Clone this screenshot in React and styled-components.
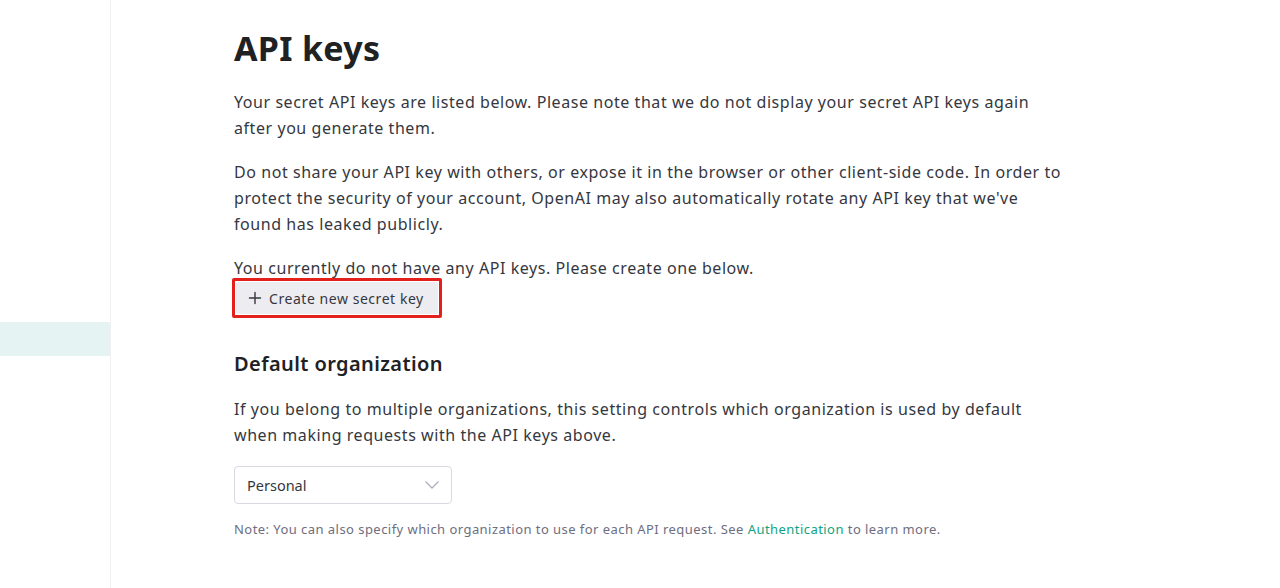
import React from "react";
import styled, { createGlobalStyle } from "styled-components";

const Global = createGlobalStyle`
  html, body { margin: 0; padding: 0; background: #fff; }
  body { font-family: "Noto Sans", Inter, sans-serif; color: #353740; }
  * { box-sizing: border-box; }
`;

const Layout = styled.div`
  display: flex;
  min-height: 588px;
  width: 1280px;
`;

const Sidebar = styled.aside`
  width: 111px;
  flex: none;
  border-right: 1px solid #f1f1f3;
  padding-top: 322px;
`;

const NavItem = styled.div`
  height: 34px;
  background: ${(p) => (p.$active ? "#e6f3f3" : "transparent")};
`;

const Main = styled.main`
  flex: 1;
  padding: 27px 0 0 123px;
`;

const Content = styled.div`
  width: 830px;
`;

const Title = styled.h1`
  margin: 0 0 20px;
  font-size: 34px;
  line-height: 42px;
  font-weight: 700;
  letter-spacing: 0.3px;
  color: #202123;
`;

const Para = styled.p`
  margin: 0 0 ${(p) => p.$mb ?? 18}px;
  font-size: 16px;
  line-height: 26px;
  letter-spacing: 0.56px;
  color: #353740;
`;

const Highlight = styled.div`
  display: inline-flex;
  border: 3px solid #e3201b;
  border-radius: 2px;
  margin: -3px 0 0 -2px;
  padding: 1px;
`;

const Button = styled.button`
  display: inline-flex;
  align-items: center;
  gap: 7px;
  height: 32px;
  padding: 0 14px 0 12px;
  border: none;
  border-radius: 3px;
  background: #ececf1;
  color: #353740;
  font-family: inherit;
  font-size: 14px;
  letter-spacing: 0.55px;
`;

const Heading = styled.h2`
  margin: 32px 0 18px;
  font-size: 20px;
  line-height: 28px;
  font-weight: 600;
  letter-spacing: 0.4px;
  color: #202123;
`;

const Select = styled.div`
  display: flex;
  align-items: center;
  justify-content: space-between;
  width: 218px;
  height: 38px;
  padding: 0 12px;
  border: 1px solid #d9d9e3;
  border-radius: 4px;
  font-size: 14.5px;
  color: #353740;
  margin-top: 18px;
`;

const Note = styled.p`
  margin: 16px 0 0;
  font-size: 13px;
  line-height: 18px;
  letter-spacing: 0.45px;
  color: #6e6e80;
`;

const Link = styled.a`
  color: #10a37f;
  text-decoration: none;
`;

export default function App() {
  return (
    <>
      <Global />
      <Layout>
        <Sidebar>
          <NavItem $active />
        </Sidebar>
        <Main>
          <Content>
            <Title>API keys</Title>
            <Para>
              Your secret API keys are listed below. Please note that we do not display your secret API keys again after you generate them.
            </Para>
            <Para>
              Do not share your API key with others, or expose it in the browser or other client-side code. In order to protect the security of your account, OpenAI may also automatically rotate any API key that we've found has leaked publicly.
            </Para>
            <Para $mb={0}>You currently do not have any API keys. Please create one below.</Para>
            <Highlight>
              <Button>
                <svg width="14" height="14" viewBox="0 0 14 14" fill="none" stroke="#353740" strokeWidth="1.4" strokeLinecap="round">
                  <path d="M7 1.5v11M1.5 7h11" />
                </svg>
                Create new secret key
              </Button>
            </Highlight>
            <Heading>Default organization</Heading>
            <Para $mb={0}>
              If you belong to multiple organizations, this setting controls which organization is used by default when making requests with the API keys above.
            </Para>
            <Select>
              <span>Personal</span>
              <svg width="14" height="8" viewBox="0 0 14 8" fill="none" stroke="#acacbe" strokeWidth="1.3" strokeLinecap="round" strokeLinejoin="round">
                <path d="M1 1l6 6 6-6" />
              </svg>
            </Select>
            <Note>
              Note: You can also specify which organization to use for each API request. See <Link href="#">Authentication</Link> to learn more.
            </Note>
          </Content>
        </Main>
      </Layout>
    </>
  );
}
